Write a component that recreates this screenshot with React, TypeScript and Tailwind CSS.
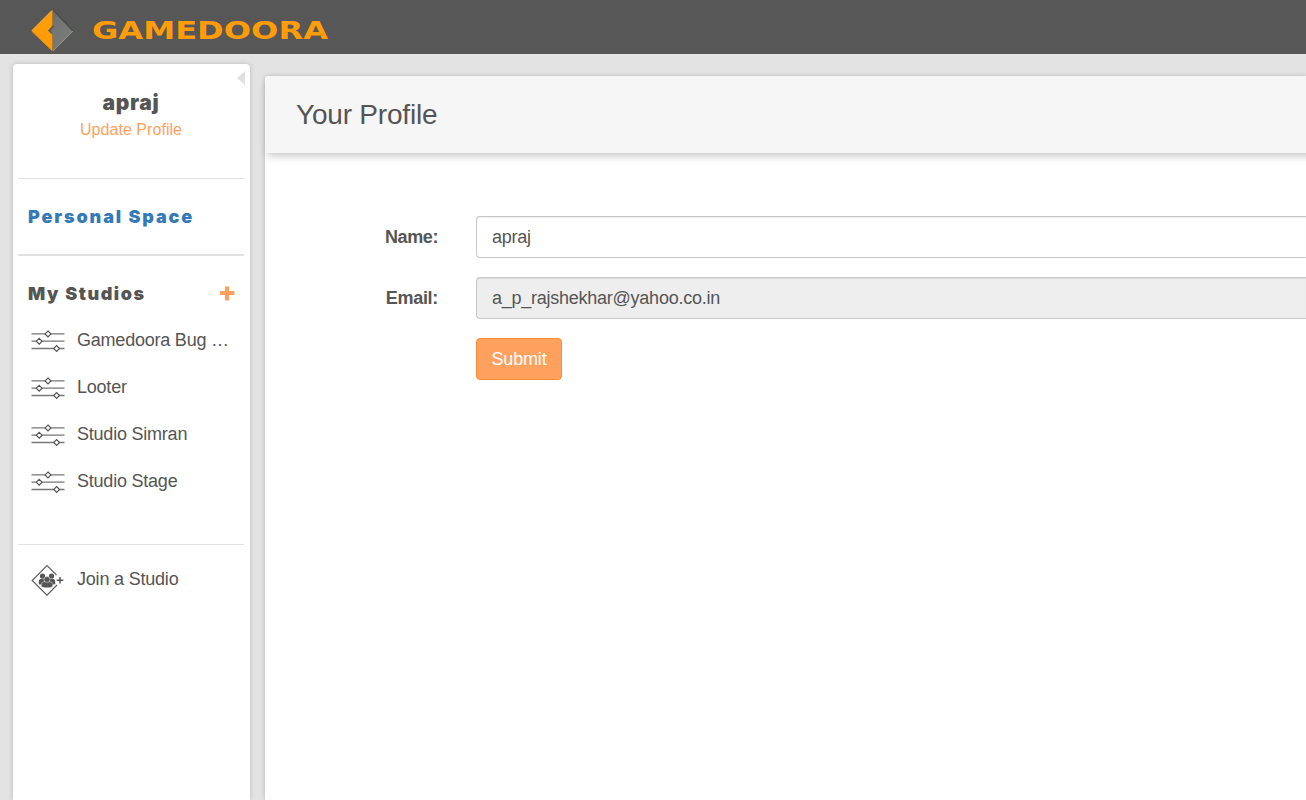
import React from "react";

function Logo() {
  return (
    <svg className="block h-[54px] w-[340px]" viewBox="0 0 340 54">
      <defs>
        <linearGradient id="grey" x1="0" y1="0" x2="1" y2="1">
          <stop offset="0" stopColor="#6a6b69" />
          <stop offset="0.35" stopColor="#747673" />
          <stop offset="1" stopColor="#7b7d7a" />
        </linearGradient>
      </defs>
      <path d="M53 10L73 31L53 51V36L48.500 30.500L53 26Z" fill="url(#grey)" />
      <path d="M53 10L73 31" stroke="#4b4b4b" strokeWidth="1.200" fill="none" />
      <path d="M73 31L53 51" stroke="#929491" strokeWidth="1" fill="none" />
      <path d="M52.500 10V25.500L48 30.500L52.500 35V51L31.500 31Z" fill="#ff9c07" />
      <path d="M52 10.500L32 30.500" stroke="#ffb53c" strokeWidth="1" fill="none" />
      <path d="M32 31.500L52 50.500" stroke="#e08a12" strokeWidth="1" fill="none" />
      <path d="M54 26L49.500 30.500L51.500 33" stroke="#5c5750" strokeWidth="1.500" fill="none" />
      <text x="92" y="38.800" fontFamily="'DejaVu Sans', sans-serif" fontWeight="700" fontSize="24" textLength="236" lengthAdjust="spacingAndGlyphs" fill="#ff9c07">
        GAMEDOORA
      </text>
    </svg>
  );
}

function SlidersIcon() {
  return (
    <svg className="block h-6 w-[34px] shrink-0" viewBox="0 0 34 24" fill="none" stroke="#777">
      <path d="M.5 4.900H33.500M.5 12.200H33.500M.5 19.500H33.500" strokeWidth="1.300" />
      <g fill="#fff" stroke="#555" strokeWidth="1.200">
        <path d="M17 2L19.900 4.900L17 7.800L14.100 4.900Z" />
        <path d="M8.200 9.300L11.100 12.200L8.200 15.100L5.300 12.200Z" />
        <path d="M25.600 16.600L28.500 19.500L25.600 22.400L22.700 19.500Z" />
      </g>
    </svg>
  );
}

function JoinIcon() {
  return (
    <svg className="block h-8 w-[34px] shrink-0" viewBox="0 0 34 32">
      <path d="M25.500 11L16 1.500L1.200 16.500L16 31.200L26 21" fill="none" stroke="#606060" strokeWidth="1.200" />
      <path d="M29 13V19.500M25.700 16.300H32.300" stroke="#555" strokeWidth="1.500" />
      <g fill="#555">
        <circle cx="11.500" cy="12" r="2.600" />
        <circle cx="20.500" cy="12" r="2.600" />
        <path d="M7.800 20V17.500Q8 14.800 10.500 14.800H13L14 20.500H8.500ZM24.200 20V17.500Q24 14.800 21.500 14.800H19L18 20.500H23.500Z" />
        <g stroke="#fff" strokeWidth="0.400">
          <path d="M10.200 21Q10.200 17.700 13 17.700H19Q21.800 17.700 21.800 21V22Q21.500 23.800 16 23.800Q10.500 23.800 10.200 22Z" />
          <circle cx="16" cy="15.500" r="3" />
        </g>
      </g>
    </svg>
  );
}

const studios = ["Gamedoora Bug …", "Looter", "Studio Simran", "Studio Stage"];
const heavy = "font-black font-['Inter',sans-serif]";

export default function App() {
  return (
    <div className="flex h-screen flex-col overflow-hidden bg-[#e3e3e3] font-['Liberation_Sans',Arial,sans-serif] text-[18px] text-[#555]">
      <header className="h-[54px] shrink-0 bg-[#575757]">
        <Logo />
      </header>
      <div className="flex min-h-0 flex-1 pl-[13px]">
        <aside className="relative mt-[10px] mr-[15px] w-[237px] shrink-0 rounded-t bg-white px-[5px] shadow-[0_0_5px_rgba(0,0,0,0.18)]">
          <svg className="absolute top-[7px] right-[5px] h-[14px] w-2" viewBox="0 0 8 14">
            <path d="M8 0V14L0 7Z" fill="#e1e1e1" />
          </svg>
          <div className="mr-px h-[115px] border-b border-[#e1e1e1] pt-[27px] text-center">
            <div className={`${heavy} text-[21px] leading-6 tracking-[0.7px]`}>apraj</div>
            <a className="block pt-px text-[16px] leading-[28px] tracking-[0.05px] text-[#ffa15e]">Update Profile</a>
          </div>
          <div className="mr-px flex h-[77px] items-center border-b-2 border-[#e1e1e1] pl-[10px]">
            <a className={`${heavy} text-[18px] tracking-[1.88px] text-[#337ab7]`}>Personal Space</a>
          </div>
          <div className="mr-px h-[289px] border-b border-[#e1e1e1] pt-[14px]">
            <div className="flex h-[47px] items-center justify-between pr-[9px] pl-[10px]">
              <span className={`${heavy} text-[18px] tracking-[1.55px]`}>My Studios</span>
              <svg className="size-[15px]" viewBox="0 0 15 15">
                <path d="M7 .5V14.500M0 7H14.500" stroke="#ffa15e" strokeWidth="4" />
              </svg>
            </div>
            {studios.map((name) => (
              <div key={name} className="flex h-[47px] items-center gap-3 pl-[13px]">
                <SlidersIcon />
                <span className="whitespace-nowrap tracking-[-0.22px]">{name}</span>
              </div>
            ))}
          </div>
          <div className="mr-px flex h-[69px] items-center gap-3 pl-[13px]">
            <JoinIcon />
            <span className="tracking-[-0.2px]">Join a Studio</span>
          </div>
        </aside>
        <main className="mt-[22px] min-w-0 flex-1 rounded-tl-[3px] bg-white shadow-[0_0_5px_rgba(0,0,0,0.18)]">
          <div className="-mr-3 flex h-[77px] items-center rounded-tl-[3px] bg-[#f6f6f6] pl-[31px] shadow-[0_5px_8px_-2px_rgba(0,0,0,0.22)]">
            <h1 className="text-[28px] tracking-[-0.2px]">Your Profile</h1>
          </div>
          <form className="flex flex-col gap-[19px] pt-[63px] tracking-[-0.25px]">
            <div className="flex items-center">
              <label className="mr-[38px] w-[173px] text-right font-bold tracking-[-0.4px]">Name:</label>
              <div className="flex h-[42px] flex-1 items-center rounded-l border border-r-0 border-[#c8c8c8] bg-white pl-[15px] shadow-[inset_0_1px_1px_rgba(0,0,0,0.075)]">apraj</div>
            </div>
            <div className="flex items-center">
              <label className="mr-[38px] w-[173px] text-right font-bold tracking-[-0.3px]">Email:</label>
              <div className="flex h-[42px] flex-1 items-center rounded-l border border-r-0 border-[#c8c8c8] bg-[#eee] pl-[15px] shadow-[inset_0_1px_1px_rgba(0,0,0,0.075)]">a_p_rajshekhar@yahoo.co.in</div>
            </div>
            <button type="button" className="ml-[211px] h-[42px] w-[86px] rounded border border-[#ff8b38] bg-[#ffa15e] tracking-[-0.15px] text-white">Submit</button>
          </form>
        </main>
      </div>
    </div>
  );
}
